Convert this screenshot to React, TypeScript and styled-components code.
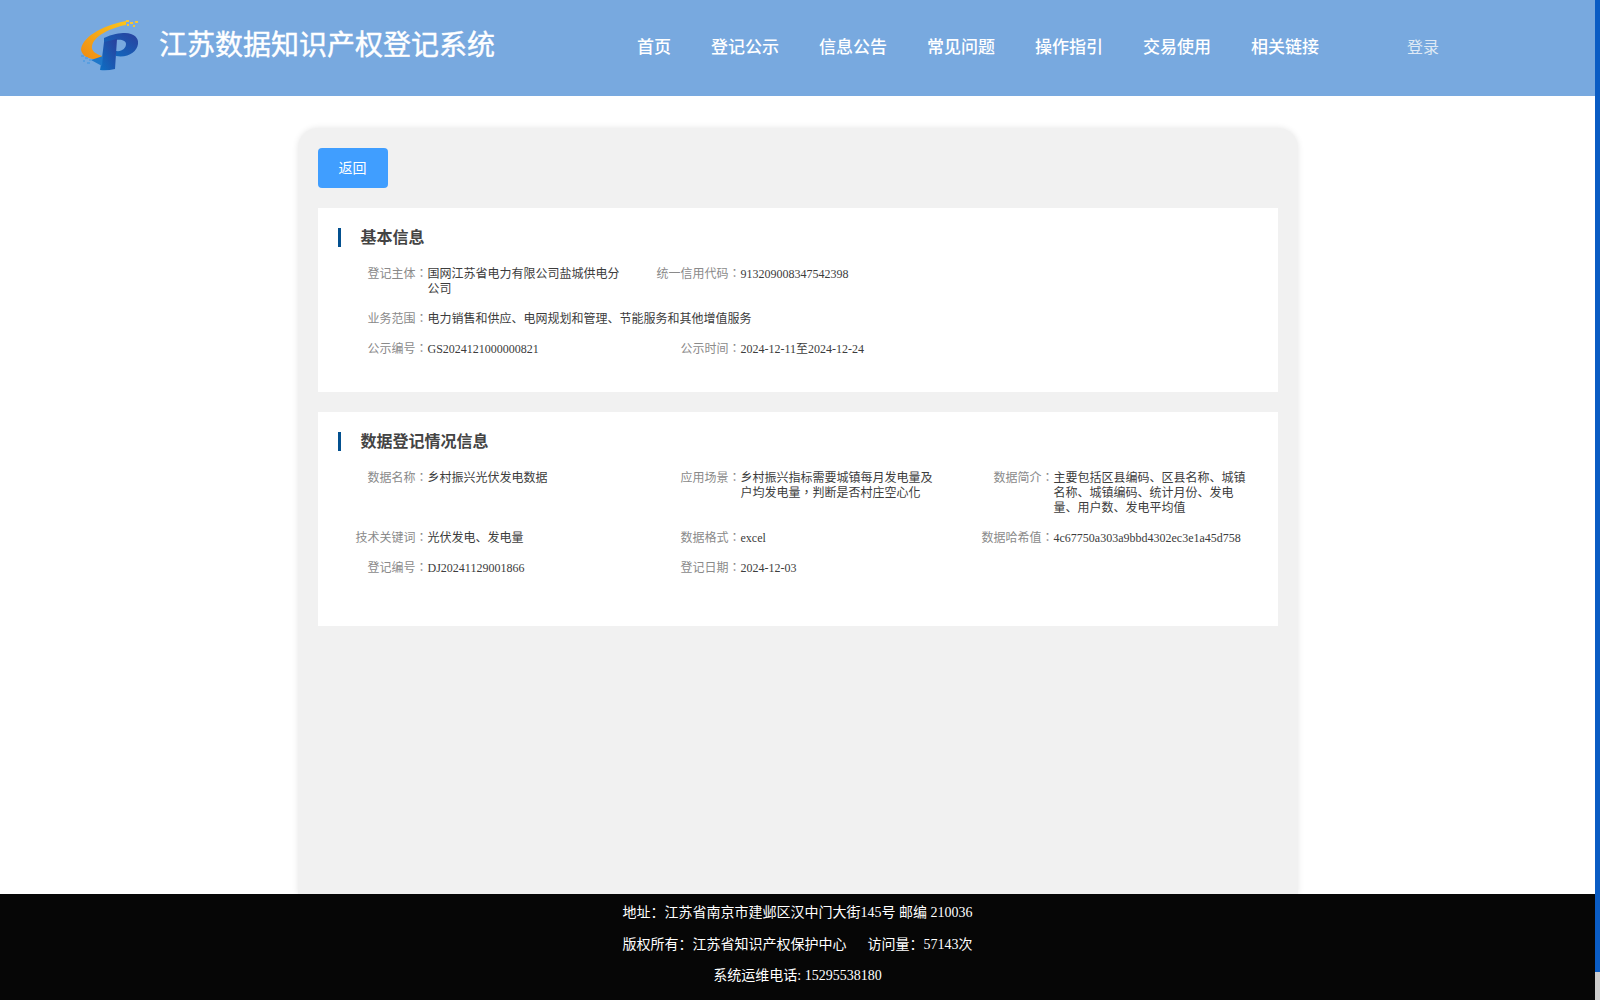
import styled, { createGlobalStyle } from 'styled-components'

const GlobalStyle = createGlobalStyle`
  html,
  body {
    margin: 0;
    height: 100%;
    overflow: hidden;
    background: #fff;
    font-family: 'Liberation Serif', 'Noto Sans CJK SC', serif;
  }
`

const SLayout = styled.div`
  display: flex;
  height: 1000px;
`

const SPage = styled.div`
  flex: 1;
  min-width: 0;
  display: flex;
  flex-direction: column;
  overflow: hidden;
`

const SScrollTrack = styled.div`
  width: 5px;
  background: #ccc;
`

const SScrollThumb = styled.div`
  height: 972px;
  background: #0a5cc4;
`

const SHeader = styled.header`
  flex: none;
  display: flex;
  align-items: center;
  box-sizing: border-box;
  height: 96px;
  padding: 0 0 5px 80px;
  background: #78a9df;
  color: #fff;
`

const SLogo = styled.svg`
  flex: none;
  margin-bottom: 1px;
`

const STitle = styled.h1`
  margin: 0 0 5px 19px;
  font-size: 28px;
  font-weight: 400;
  white-space: nowrap;
  -webkit-text-stroke: 0.4px #fff;
`

const SNav = styled.nav`
  display: flex;
  gap: 40px;
  margin-left: 142px;
`

const SNavItem = styled.a`
  font-size: 17px;
  font-weight: 500;
  white-space: nowrap;
  color: #fff;
`

const SLogin = styled.a`
  margin-left: 88px;
  font-size: 16px;
  color: #dfe9f5;
`

const SMain = styled.main`
  flex: 1;
  min-height: 0;
  display: flex;
  justify-content: center;
  padding-top: 32px;
`

const SPanel = styled.div`
  display: flex;
  flex-direction: column;
  align-items: flex-start;
  gap: 20px;
  box-sizing: border-box;
  width: 1000px;
  padding: 20px;
  background: #f1f1f1;
  border-radius: 20px 20px 0 0;
  box-shadow: 0 0 6px rgba(0, 0, 0, 0.1);
`

const SBackButton = styled.button`
  width: 70px;
  height: 40px;
  padding: 0 0 2px;
  border: 0;
  border-radius: 4px;
  background: #409eff;
  color: #fff;
  font-family: inherit;
  font-size: 14px;
`

const SSection = styled.section<{ $bottom: number }>`
  box-sizing: border-box;
  width: 100%;
  padding: 20px 0 ${(p) => p.$bottom}px 20px;
  background: #fff;
`

const SSectionTitle = styled.h2`
  margin: 0 0 12px;
  padding-left: 20px;
  border-left: 3px solid #03508f;
  font-size: 16px;
  font-weight: 700;
  line-height: 19px;
  color: #444;
`

const SGrid = styled.div`
  display: grid;
  grid-template-columns: repeat(3, 313px);
`

const SField = styled.div<{ $wide?: boolean }>`
  display: flex;
  padding: 7.5px 0;
  font-size: 12px;
  line-height: 15px;
  grid-column: ${(p) => (p.$wide ? '1 / -1' : 'auto')};
`

const SLabel = styled.span`
  flex: none;
  width: 90px;
  text-align: right;
  white-space: nowrap;
  color: #8a8a8a;
`

// centred full-width punctuation, as the traditional-Chinese glyphs draw it
const SPunct = styled.span`
  font-family: 'Liberation Serif', 'Noto Sans CJK TC', serif;
`

const SValue = styled.span<{ $wide?: boolean; $centredPunct?: boolean }>`
  width: ${(p) => (p.$wide ? 'auto' : '203px')};
  color: #3c3c3c;
  font-family: ${(p) =>
    p.$centredPunct ? "'Liberation Serif', 'Noto Sans CJK TC', serif" : 'inherit'};
`

const SFooter = styled.footer`
  flex: none;
  height: 106px;
  padding-top: 3px;
  box-sizing: border-box;
  background: #060606;
  color: #fff;
  font-size: 14px;
  line-height: 31.5px;
  text-align: center;
`

const SFooterLine = styled.div`
  white-space: pre;
`

const Logo = () => (
  <SLogo width="60" height="54" viewBox="0 0 60 54">
    <defs>
      <linearGradient id="swoosh" x1="0" y1="1" x2="1" y2="0">
        <stop offset="0" stopColor="#ef8a12" />
        <stop offset="1" stopColor="#fcc51c" />
      </linearGradient>
      <linearGradient id="letter" x1="0" y1="1" x2="1" y2="0">
        <stop offset="0" stopColor="#0d6fc4" />
        <stop offset="1" stopColor="#2a3f9c" />
      </linearGradient>
    </defs>
    <path d="M1 32C2 20 20 8 46 3L46 7C30 10 14 18 12 28C11 33 16 36 22 38L21 41C12 42 3 40 1 32Z" fill="url(#swoosh)" />
    <path d="M24 20C32 16 40 15 45 15C54 15 59 20 58 26C57 34 48 40 36 38L36 33C42 34 46 30 46 26C46 23 42 21 36 22L24 25Z" fill="url(#letter)" />
    <path d="M24 24L37 21L35 51Q27 53 20 52L22 40Z" fill="url(#letter)" />
    <path d="M11 42L23 38L22 48Z" fill="#1f77c9" />
    <g fill="#f7c531">
      <rect x="46" y="2" width="3" height="2" />
      <rect x="50" y="4" width="3" height="2" />
      <rect x="47" y="6" width="2" height="2" />
      <rect x="55" y="3" width="3" height="2" />
      <rect x="53" y="7" width="2" height="2" />
    </g>
    <g fill="#5a9fe0">
      <rect x="1" y="37" width="3" height="2" />
      <rect x="5" y="39" width="3" height="2" />
      <rect x="9" y="41" width="3" height="2" />
      <rect x="3" y="42" width="2" height="2" />
      <rect x="7" y="44" width="3" height="2" />
    </g>
  </SLogo>
)

const navItems = ['首页', '登记公示', '信息公告', '常见问题', '操作指引', '交易使用', '相关链接']

type FieldData = { label: string; value: string; wide?: boolean; centredPunct?: boolean }

const basicFields: FieldData[] = [
  { label: '登记主体', value: '国网江苏省电力有限公司盐城供电分公司' },
  { label: '统一信用代码', value: '913209008347542398' },
  { label: '业务范围', value: '电力销售和供应、电网规划和管理、节能服务和其他增值服务', wide: true },
  { label: '公示编号', value: 'GS2024121000000821' },
  { label: '公示时间', value: '2024-12-11至2024-12-24' },
]

const dataFields: FieldData[] = [
  { label: '数据名称', value: '乡村振兴光伏发电数据' },
  { label: '应用场景', value: '乡村振兴指标需要城镇每月发电量及户均发电量，判断是否村庄空心化', centredPunct: true },
  { label: '数据简介', value: '主要包括区县编码、区县名称、城镇名称、城镇编码、统计月份、发电量、用户数、发电平均值' },
  { label: '技术关键词', value: '光伏发电、发电量' },
  { label: '数据格式', value: 'excel' },
  { label: '数据哈希值', value: '4c67750a303a9bbd4302ec3e1a45d758' },
  { label: '登记编号', value: 'DJ20241129001866' },
  { label: '登记日期', value: '2024-12-03' },
]

const Fields = ({ items }: { items: FieldData[] }) => (
  <SGrid>
    {items.map((item) => (
      <SField key={item.label} $wide={item.wide}>
        <SLabel>
          {item.label}
          <SPunct>：</SPunct>
        </SLabel>
        <SValue $wide={item.wide} $centredPunct={item.centredPunct}>
          {item.value}
        </SValue>
      </SField>
    ))}
  </SGrid>
)

export default function App() {
  return (
    <SLayout>
      <GlobalStyle />
      <SPage>
        <SHeader>
          <Logo />
          <STitle>江苏数据知识产权登记系统</STitle>
          <SNav>
            {navItems.map((item) => (
              <SNavItem key={item}>{item}</SNavItem>
            ))}
          </SNav>
          <SLogin>登录</SLogin>
        </SHeader>
        <SMain>
          <SPanel>
            <SBackButton>返回</SBackButton>
            <SSection $bottom={28}>
              <SSectionTitle>基本信息</SSectionTitle>
              <Fields items={basicFields} />
            </SSection>
            <SSection $bottom={43}>
              <SSectionTitle>数据登记情况信息</SSectionTitle>
              <Fields items={dataFields} />
            </SSection>
          </SPanel>
        </SMain>
        <SFooter>
          <SFooterLine>地址：江苏省南京市建邺区汉中门大街145号 邮编 210036</SFooterLine>
          <SFooterLine>版权所有：江苏省知识产权保护中心      访问量：57143次</SFooterLine>
          <SFooterLine>系统运维电话: 15295538180</SFooterLine>
        </SFooter>
      </SPage>
      <SScrollTrack>
        <SScrollThumb />
      </SScrollTrack>
    </SLayout>
  )
}
